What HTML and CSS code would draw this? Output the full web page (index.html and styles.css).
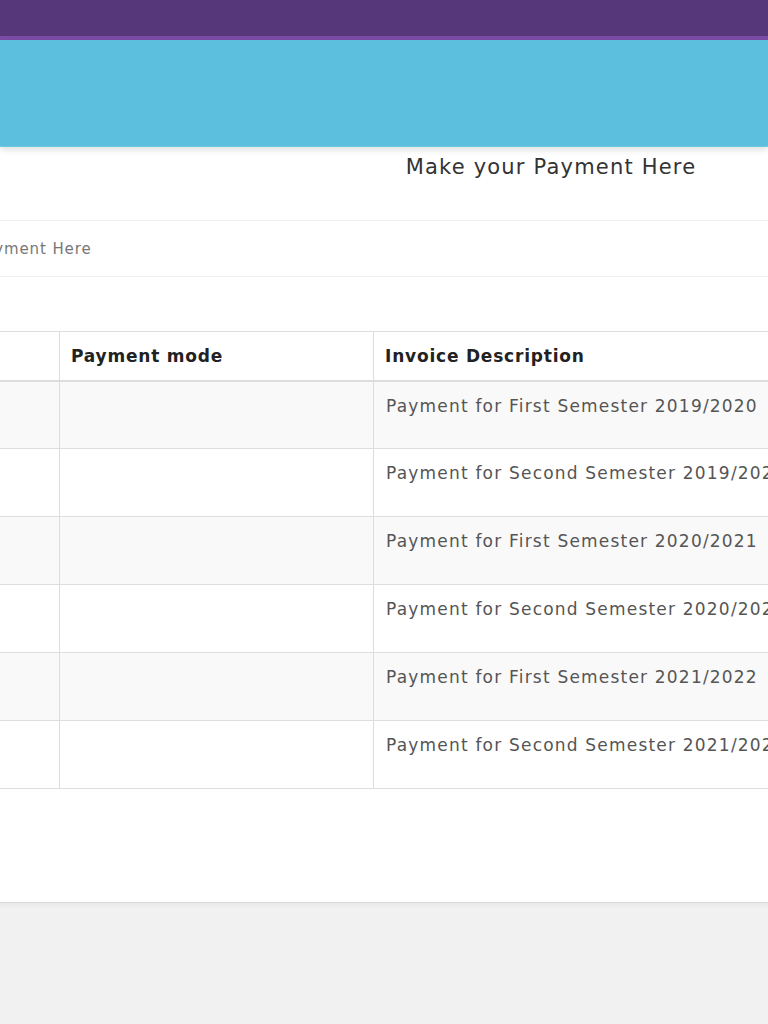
FILE: index.html
```html
<!DOCTYPE html>
<html>
<head>
<meta charset="utf-8">
<link rel="stylesheet" href="styles.css">
</head>
<body>
<div class="topbar"></div>
<div class="banner"></div>
<main class="page">
  <h1 class="title">Make your Payment Here</h1>
  <div class="card">
    <div class="card-head">Make your Payment Here</div>
    <div class="card-body">
      <table class="invoices">
        <thead>
          <tr><th class="c1">Amount</th><th class="c2">Payment mode</th><th class="c3">Invoice Description</th></tr>
        </thead>
        <tbody>
          <tr><td></td><td></td><td>Payment for First Semester 2019/2020</td></tr>
          <tr><td></td><td></td><td>Payment for Second Semester 2019/2020</td></tr>
          <tr><td></td><td></td><td>Payment for First Semester 2020/2021</td></tr>
          <tr><td></td><td></td><td>Payment for Second Semester 2020/2021</td></tr>
          <tr><td></td><td></td><td>Payment for First Semester 2021/2022</td></tr>
          <tr><td></td><td></td><td>Payment for Second Semester 2021/2022</td></tr>
        </tbody>
      </table>
    </div>
  </div>
</main>
<div class="footer-bg"></div>
</body>
</html>
```
FILE: styles.css
```css
html, body { margin: 0; padding: 0; }
body {
  background: #f1f1f1;
  font-family: "DejaVu Sans", "Noto Sans", sans-serif;
  color: #333;
  overflow: hidden;
  width: 768px;
}
.topbar {
  height: 36px;
  background: #56377a;
  border-bottom: 4px solid #7b4ba6;
  box-shadow: 0 1px 0 #c080c8;
}
.banner {
  height: 106px;
  background: #5bbfdd;
  border-bottom: 1px solid #6dc8e2;
  box-shadow: 0 3px 6px rgba(0,0,0,0.12);
  position: relative;
  z-index: 1;
}
.page {
  width: 1366px;
  margin-left: -132px;
  background: #fff;
  padding-bottom: 113px;
  border-bottom: 1px solid #dcdcdc;
  box-shadow: 0 2px 4px rgba(0,0,0,0.05);
}
.title {
  margin: 0;
  height: 74px;
  padding-top: 5px;
  box-sizing: border-box;
  text-align: center;
  font-weight: 400;
  font-size: 21px;
  letter-spacing: 1.2px;
  line-height: 30px;
  color: #333;
  border-bottom: 1px solid #efefef;
}
.card-head {
  height: 56px;
  box-sizing: border-box;
  padding: 0 15px;
  display: flex;
  align-items: center;
  font-size: 15px;
  letter-spacing: 0.9px;
  color: #777;
  border-bottom: 1px solid #efefef;
}
.card-body {
  padding-top: 54px;
}
.invoices {
  border-collapse: collapse;
  table-layout: fixed;
  width: 1005px;
}
.invoices th, .invoices td {
  border: 1px solid #dddddd;
  text-align: left;
  vertical-align: top;
}
.invoices th {
  height: 49px;
  box-sizing: border-box;
  padding: 0 11px;
  vertical-align: middle;
  font-size: 17px;
  font-weight: 700;
  letter-spacing: 0.8px;
  color: #222;
  border-bottom: 2px solid #dddddd;
}
.c1 { width: 191px; }
.c2 { width: 314px; }
.c3 { width: 500px; }
.invoices td {
  height: 68px;
  box-sizing: border-box;
  padding: 10px 12px;
  font-size: 17px;
  letter-spacing: 1.2px;
  line-height: 28px;
  color: #555;
}
.invoices tbody tr:nth-child(odd) td { background: #f9f9f9; }
.footer-bg { height: 200px; }
```
